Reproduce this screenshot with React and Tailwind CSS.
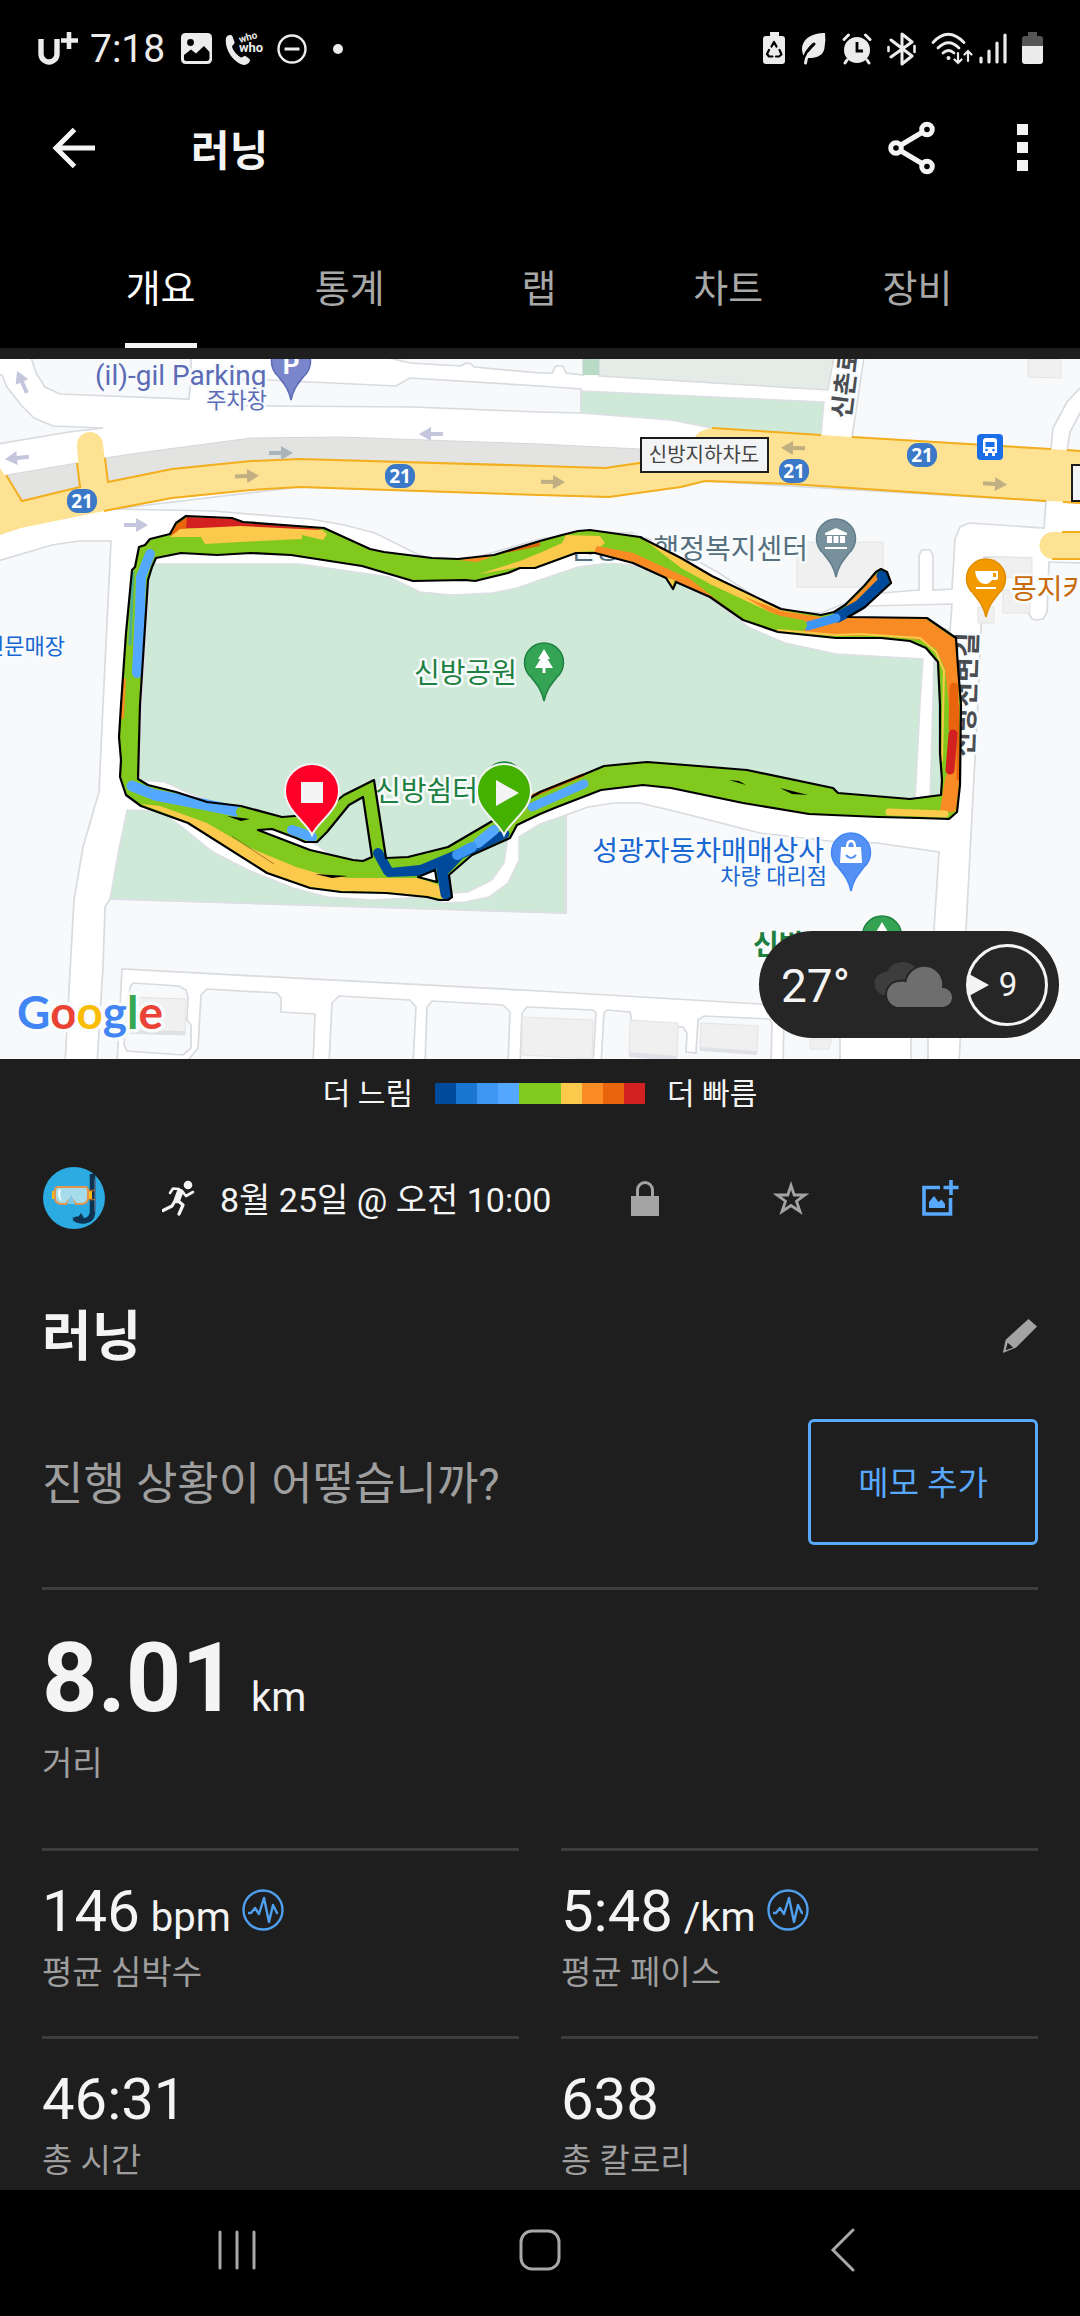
import React, { useState } from "react";
import { clsx } from "clsx";

const TABS = ["개요", "통계", "랩", "차트", "장비"];

const PACE_COLORS = [
  "bg-[#004a9c]",
  "bg-[#1976d2]",
  "bg-[#3d96f3]",
  "bg-[#55a8ff]",
  "bg-[#82c91e]",
  "bg-[#82c91e]",
  "bg-[#fbc94b]",
  "bg-[#fb8b25]",
  "bg-[#e8650d]",
  "bg-[#d32020]",
];

const STATS = [
  { value: "146", unit: "bpm", label: "평균 심박수", chart: true },
  { value: "5:48", unit: "/km", label: "평균 페이스", chart: true },
  { value: "46:31", label: "총 시간" },
  { value: "638", label: "총 칼로리" },
];

/* ---------- Status bar ---------- */

const StatusBar = () => (
  <div className="flex h-[98px] items-center justify-between bg-black pl-9 pr-9 text-[#ececec]">
    <div className="flex items-center gap-3">
      <svg width="42" height="40" viewBox="0 0 42 40" fill="none" stroke="currentColor">
        <path d="M5 10v15a8 8 0 0 0 16 0V10" strokeWidth="5.4" />
        <path d="M33 3v17M25 11.500h17" strokeWidth="4.600" />
      </svg>
      <span className="text-[39px] leading-[48px]">7:18</span>
      <div className="flex items-center gap-3 pl-1">
        <svg width="32" height="32" viewBox="0 0 32 32">
          <rect width="31" height="31" rx="4.500" fill="currentColor" />
          <circle cx="9.500" cy="9.500" r="3.400" fill="#000" />
          <path d="M3 26v-4l7-5.500 5 4 8-7.500 5.500 6V25q0 3-3 3H6q-3 0-3-2z" fill="#000" />
        </svg>
        <svg width="40" height="44" viewBox="0 -5 40 44" fill="currentColor">
          <path d="M1 6C2 3 6 2 7.500 4.500L9.500 10c.5 2-2 3-2.500 4.500 1 4.500 6 9.500 9 11 2 0 2.500-2 4.500-1.500l4 3c1.500 2-1 5.500-5 6C10 32-1 18 1 6z" />
          <text x="14" y="20" className="text-[13px] font-bold">who</text>
          <text x="15" y="11" transform="rotate(-16 15 11)" className="text-[10px] font-bold">who</text>
        </svg>
        <svg width="30" height="30" viewBox="0 0 30 30" fill="none" stroke="currentColor">
          <circle cx="15" cy="15" r="13.500" strokeWidth="2.400" />
          <path d="M7.500 15h15" strokeWidth="3" />
        </svg>
        <span className="ml-3.5 h-2.5 w-2.5 rounded-full bg-[#ececec]" />
      </div>
    </div>

    <div className="flex items-center gap-[15px]">
      <svg width="23" height="34" viewBox="0 0 23 34">
        <path d="M7 0h9v4h3q3 0 3 3v22q0 3-3 3H3q-3 0-3-3V7q0-3 3-3h4z" fill="currentColor" />
        <path d="M8.500 14.500 11 10l2.500 4.500M16.500 18l2 4.500-2.500 2h-3M9.500 24.500H6L4 22l2-4" fill="none" stroke="#000" strokeWidth="2.200" strokeLinecap="round" strokeLinejoin="round" />
      </svg>
      <svg width="26" height="34" viewBox="0 0 26 34">
        <path d="M24 1C12 1 1 6 1 18q0 4 3 8 18 1 19.500-10Q25 8 24 1z" fill="currentColor" />
        <path d="M13 12Q6 18 3 26" fill="none" stroke="#000" strokeWidth="3" strokeLinecap="round" />
        <path d="M8 21.500Q5 26 4.500 31" fill="none" stroke="currentColor" strokeWidth="3" strokeLinecap="round" />
      </svg>
      <svg width="30" height="34" viewBox="0 0 30 34" fill="none" stroke="currentColor" strokeLinecap="round">
        <circle cx="15" cy="18" r="13" fill="currentColor" stroke="none" />
        <path d="M2 7.500 6.500 3M28 7.500 23.500 3M5 28l-2 3M25 28l2 3" strokeWidth="3" />
        <path d="M15 10v9h6" stroke="#000" strokeWidth="2.800" strokeLinecap="butt" />
      </svg>
      <svg width="29" height="34" viewBox="0 0 29 34" fill="none" stroke="currentColor" strokeWidth="3" strokeLinejoin="round" strokeLinecap="round">
        <path d="m4 8 21 16-10 8V2l10 8L4 25" />
        <path d="M1.500 15v4M27.500 14v6" strokeWidth="2.600" />
      </svg>
      <div className="flex items-center gap-1.5">
        <svg width="42" height="34" viewBox="0 0 42 34" fill="none" stroke="currentColor" strokeWidth="2.800" strokeLinecap="round">
          <path d="M2 10.500Q17-6 33 10.500M7 16q10.500-10.500 21 0M12 21q5.500-5 11 0" />
          <circle cx="17.500" cy="26" r="2" fill="currentColor" stroke="none" />
          <path d="M27 21v10m-3.500-3.500L27 31l3.500-3.500M37 29V19m-3.500 3.500L37 19l3.500 3.500" strokeWidth="2.200" />
        </svg>
        <svg width="28" height="34" viewBox="0 0 28 34" stroke="currentColor" strokeWidth="3.200" strokeLinecap="round">
          <path d="M2 26v4M10 19v11M18 11v19M26 3v27" />
        </svg>
      </div>
      <svg width="22" height="34" viewBox="0 0 22 34">
        <path d="M6 0h9v4h3q3 0 3 3v7H0V7q0-3 3-3h3z" fill="#555" />
        <path d="M0 14h21v15q0 3-3 3H3q-3 0-3-3z" fill="currentColor" />
      </svg>
    </div>
  </div>
);

/* ---------- App bar ---------- */

const AppBar = () => (
  <header className="flex h-[99px] items-center justify-between bg-black pl-[51px] pr-[52px] text-[#f4f4f4]">
    <div className="flex items-center">
      <button type="button" aria-label="뒤로">
        <svg width="44" height="44" viewBox="0 0 44 44" fill="none" stroke="currentColor" strokeWidth="5">
          <path d="M23.500 3.500 5 22l18.500 18.500M5 22h39" />
        </svg>
      </button>
      <h1 className="ml-24 pt-2 text-[42px] font-bold leading-[56px]">러닝</h1>
    </div>
    <div className="flex items-center gap-20">
      <button type="button" aria-label="공유">
        <svg width="50" height="54" viewBox="0 0 50 54" fill="none" stroke="currentColor" strokeWidth="5">
          <circle cx="9" cy="27" r="5.300" />
          <circle cx="40" cy="8.500" r="5.300" />
          <circle cx="40" cy="45.500" r="5.300" />
          <path d="m14 24 21-12.500M14 30l21 12.500" />
        </svg>
      </button>
      <button type="button" aria-label="더보기" className="flex flex-col gap-[7px]">
        <span className="h-[11px] w-[11px] bg-[#f4f4f4]" />
        <span className="h-[11px] w-[11px] bg-[#f4f4f4]" />
        <span className="h-[11px] w-[11px] bg-[#f4f4f4]" />
      </button>
    </div>
  </header>
);

/* ---------- Map ---------- */

const MapPin = ({ x, y, fill, stroke, children }) => (
  <g transform={`translate(${x} ${y})`}>
    <path
      d="M0 39C-3 26-7 23-13 15A19.500 19.500 0 1 1 13 15C7 23 3 26 0 39z"
      fill={fill}
      stroke={stroke}
      strokeWidth="1.500"
    />
    {children}
  </g>
);

const Tree = () => <path d="M0-13 6-3H3.500L9 6H1.500v5h-3V6H-9l5.500-9H-6z" fill="#fff" />;

const RouteMarker = ({ x, y, fill, children }) => (
  <g transform={`translate(${x} ${y})`}>
    <path
      d="M0 44C-5 31-27 20-27 0A27 27 0 1 1 27 0C27 20 5 31 0 44z"
      fill={fill}
      stroke="#f4f4f4"
      strokeWidth="2"
    />
    {children}
  </g>
);

const ARROWS = [
  [22, 23, -114, "#c3c6dc"],
  [17, 99, 174, "#c3c6dc"],
  [431, 75, 180, "#c3c6dc"],
  [281, 94, 0, "#a9b5bb"],
  [247, 117, -2, "#c0af82"],
  [136, 166, 0, "#c3c6dc"],
  [553, 123, 1, "#c0af82"],
  [793, 89, 181, "#c0af82"],
  [995, 125, 3, "#c0af82"],
];

const BADGES = [
  [82, 142],
  [400, 117],
  [794, 112],
  [922, 96],
];

const BLOCKS = [
  "-2,16 2,16 7,28 21,46 34,59 53,67 103,69 69,73 -2,85",
  "31,-2 36,14 45,28 60,35 189,40 191,20 191,-2",
  "240,20 268,21 396,27 410,19 540,27 581,30 581,54 540,53 413,48 268,47 240,47",
  "385,-2 410,4 461,7 466,4 471,5 474,8 540,14 552,14 556,7 563,7 566,14 583,16 583,-2",
  "-2,202 52,186 79,182 111,182 103,346 99,433 83,488 74,541 65,705 -2,705",
  "114,150 213,152 310,160 344,166 375,174 399,186 417,195 440,202 470,200 540,180 585,173 633,174 678,191 719,214 760,241 790,252 821,254 860,238 881,234 919,231 919,196 922,191 930,191 933,196 933,231 952,230 955,180 960,168 969,164 1044,169 1046,142 705,122 609,138 300,128",
  "867,247 952,245 950,272 925,262 850,259",
  "984,198 1031,199 1028,253 1032,260 1037,261 1043,260 1047,253 1049,203 1085,204 1085,705 959,705 966,571 978,341 981,271",
  "864,-2 852,78 1051,90 1053,69 1067,43 1080,29 1085,29 1085,-2",
  "1085,50 1080,54 1070,73 1067,92 1085,94",
  "110,540 105,548 103,608 97,705 117,705 122,610 540,632 760,645 930,655 934,571 939,493 877,484 829,482 760,474 678,453 640,444 614,444 588,448 566,456 566,554",
  "133,624 179,627 186,631 188,638 187,661 191,666 191,689 183,696 127,692 124,686 130,628",
  "207,630 277,634 281,639 281,653 315,655 313,705 185,705 198,689 201,636",
  "339,637 410,641 416,648 413,705 329,705 332,644",
  "432,642 503,646 510,653 508,705 425,705 427,648",
  "527,648 593,651 596,654 593,705 520,705 522,654",
  "607,651 630,653 632,663 683,668 687,674 686,693 696,694 698,661 704,657 769,660 772,664 771,705 601,705 604,654",
  "784,660 840,664 840,705 783,705",
  "911,660 928,660 928,705 911,705",
];

const PARKS = [
  "150,205 300,205 389,218 420,233 451,236 492,234 517,229 540,221 578,208 609,204 633,206 671,221 709,239 750,269 785,284 836,295 923,300 920,346 915,442 836,436 747,415 647,407 602,410 540,440 489,472 448,495 403,505 358,505 328,494 317,486 272,466 213,443 193,436 165,423 139,421 142,346",
  "934,302 946,312 945,442 930,442",
  "127,451 160,452 182,468 213,493 248,511 293,529 327,538 372,541 427,538 444,544 465,543 489,538 508,524 519,501 519,478 540,465 566,456 565,554 110,540 118,495",
  "508,478 504,504 492,521 468,533 453,534 449,514 475,494",
  "581,32 824,43 821,76 712,69 671,61 581,54",
];

const BUILDINGS = [
  "797,183 883,183 883,228 797,228",
  "994,198 1032,199 1032,219 994,218",
  "1003,231 1030,231 1030,254 1003,254",
  "978,248 994,248 994,264 978,264",
  "1028,0 1061,0 1061,19 1028,18",
  "130,638 186,640 185,676 130,674",
  "522,658 593,661 592,700 522,696",
  "630,661 678,664 677,698 629,694",
  "701,664 758,667 757,694 700,690",
  "810,680 832,680 829,690 810,690",
];

const ROUTE_SHAPE =
  "M121 346 126 274 132 211 135 208 139 188 145 186 150 180 170 175 176 164 186 157 232 159 243 163 324 169 370 190 384 193 432 199 458 200 494 196 540 182 562 176 578 172 590 171 640 178 681 199 712 217 781 250 821 256 834 253 845 246 864 227 876 213 881 210 887 213 891 224 865 248 848 258 927 259 956 279 958 308 961 346 960 426 957 453 949 460 919 459 879 458 809 455 743 444 671 429 643 426 601 431 557 448 540 455 517 466 510 479 472 496 449 516 452 538 448 541 439 541 427 538 386 534 341 533 310 529 267 514 188 464 141 447 126 436 120 418 121 401 119 378z" +
  "M140 346 148 221 152 208 156 199 181 194 217 196 251 194 291 196 362 207 413 222 465 221 475 222 508 214 520 209 535 209 576 194 595 194 633 204 666 219 673 230 676 223 710 238 743 261 778 273 836 279 881 279 910 282 926 289 938 303 940 346 940 394 942 421 941 436 910 440 838 434 833 429 747 411 698 407 647 403 604 407 585 415 540 433 489 464 448 488 408 498 386 499 374 421 344 436 320 455 282 458 241 447 207 443 176 433 148 426 138 420z" +
  "M349 446 363 438 372 498 363 502 353 501 310 491 258 471 272 470 296 479 305 483 317 483 327 473z" +
  "M418 518 435 511 437 523z";

// Pace-coloured areas, drawn over the green base track
const PACE_AREAS = [
  ["#e8650d", "170,177 177,165 187,158 193,160 193,168 178,174"],
  ["#d32020", "187,158 232,160 243,164 322,170 300,174 186,169"],
  ["#fbc94b", "170,178 180,170 240,167 322,171 327,175 323,181 302,176 302,180 240,183 205,185 201,178"],
  ["#f98b25", "458,201 494,197 477,203"],
  ["#d9650d", "500,195 540,183 540,187"],
  ["#fbc94b", "479,215 520,202 542,193 562,184 566,176 600,177 605,184 595,192 576,193 535,208 520,208"],
  ["#f98b25", "597,187 633,194 690,220 726,248 710,237 666,218 633,203 594,193"],
  ["#fbc94b", "664,218 674,221 673,229"],
  ["#fbc94b", "645,181 681,200 712,218 781,251 812,258 812,264 770,253 712,226 681,209"],
  ["#f98b25", "745,238 781,252 821,258 850,258 926,260 955,280 958,310 959,346 949,346 945,310 936,290 920,281 880,276 840,277 806,275 800,264 770,253"],
  ["#f98b25", "846,247 864,229 876,215 880,222 862,240 850,252"],
  ["#f98b25", "960,380 959,426 956,452 940,452 945,420"],
  ["#fbc94b", "141,445 160,447 207,464 248,488 296,508 317,514 348,519 400,519 418,519 439,526 444,540 427,537 386,533 341,532 310,528 267,513 188,463"],
  ["#004a9c", "384,505 390,509 420,506 458,490 468,494 449,514 437,516 437,510 418,517 387,518"],
];

const PACE_LINES = [
  ["#4fae8f", 3, "133,213 130,285"],
  ["#55a8ff", 10, "150,195 141,218 140,251 137,314"],
  ["#f98b25", 4, "124,321 122,358"],
  ["#fbc94b", 2, "778,271 836,276 860,275 920,279 936,293 944,312 942,402"],
  ["#004a9c", 11, "882,217 884,222 860,246 838,258"],
  ["#3d96f3", 9, "836,259 808,267"],
  ["#82c91e", 10, "802,266 780,262"],
  ["#e8650d", 3, "958,346 958,420"],
  ["#e8650d", 9, "954,328 953,369"],
  ["#d32020", 9, "953,375 950,411"],
  ["#fbc94b", 7, "889,453 945,455"],
  ["#f98b25", 9, "947,444 951,449"],
  ["#d9650d", 3, "532,437 583,416"],
  ["#55a8ff", 9, "584,425 532,448"],
  ["#004a9c", 9, "505,475 462,495"],
  ["#55a8ff", 10, "494,471 478,484"],
  ["#3d96f3", 10, "472,488 457,496"],
  ["#004a9c", 10, "378,494 388,512"],
  ["#004a9c", 11, "442,512 446,535"],
  ["#55a8ff", 11, "132,427 155,436 207,446 236,452"],
  ["#82c91e", 10, "241,453 262,463"],
  ["#55a8ff", 10, "292,471 312,478"],
];

const ROAD_EDGES = [
  "6,116 22,142 80,128 77,104",
  "105,99 108,123 172,110 251,102 300,100 540,107 605,109 640,104",
  "712,69 821,76",
  "852,78 1051,90",
  "1067,91 1080,92",
  "104,152 114,150 172,139 251,131 300,128 540,136 609,138 681,128 705,122 791,125 1046,142",
  "1063,143 1080,144",
  "1052,200 1080,200",
  "1062,173 1080,173",
];

const LABEL = "[paint-order:stroke] stroke-[#f8fbfc] stroke-[5px] [stroke-linejoin:round]";

const RouteMap = () => (
  <svg viewBox="0 0 1080 700" className="block h-auto w-full bg-white" role="img" aria-label="러닝 경로 지도">
    <g fill="#f7f9fb" stroke="#d8dbdf" strokeWidth="1.700">
      {BLOCKS.map((points) => <polygon key={points} points={points} />)}
    </g>
    <polygon points="599,-2 834,-2 828,31 599,17" fill="#e5ebe6" stroke="#d8dbdf" strokeWidth="1.500" />
    <rect x="583" width="16" height="16" fill="#b9dbc5" />
    <g fill="#cfe9d8" stroke="#dcdfe3" strokeWidth="1.500">
      {PARKS.map((points) => <polygon key={points} points={points} />)}
    </g>
    <g fill="#f0f0f0" stroke="#e4e4e4">
      {BUILDINGS.map((points) => <polygon key={points} points={points} />)}
    </g>
    <path d="m629 693 48 4v5l-48-4zM700 688l57 4v4l-57-4zM131 671l54 1v4l-54-1z" fill="#e0e1e6" />

    {/* Highway 21 */}
    <path
      d="M7 116 77 104 105 99 138 94 251 79 341 78 540 85 640 90V110L540 110 300 104 172 114 60 140 22 142z"
      fill="#e3e3e1"
      stroke="#d5d8da"
    />
    <path
      d="M0 109 22 142 80 128 77 86A13 13 0 0 1 103 86L108 123 172 110 251 102 300 100 540 107 605 109 650 100 694 80Q697 71 712 69L821 76 852 78 1080 92V144L791 125 705 122 681 128 609 138 540 136 300 128 251 131 172 139 114 150 21 169 0 176z"
      fill="#fde293"
    />
    <path d="M1080 173H1053A13.500 13.500 0 0 0 1053 200H1080z" fill="#fde293" />
    <g fill="none" stroke="#f2ae1c" strokeWidth="2">
      {ROAD_EDGES.map((points) => <polyline key={points} points={points} />)}
    </g>

    {ARROWS.map(([x, y, angle, color]) => (
      <path
        key={`${x}-${y}`}
        d="M-12-2H0V-7L12 0 0 7V2H-12z"
        fill={color}
        transform={`translate(${x} ${y}) rotate(${angle})`}
      />
    ))}

    {BADGES.map(([x, y]) => (
      <g key={x}>
        <rect x={x - 15} y={y - 12} width="30" height="24" rx="11" fill="#3c78c8" />
        <text x={x} y={y + 7} textAnchor="middle" fill="#fff" className="font-['Noto_Sans'] text-[19px] font-bold">21</text>
      </g>
    ))}

    <rect x="641" y="79" width="127" height="34" fill="#f3f4f6" stroke="#1c1c1c" strokeWidth="2" />
    <text x="704" y="103" textAnchor="middle" fill="#444" className="text-[20px]">신방지하차도</text>
    <rect x="1072" y="106" width="30" height="36" fill="#f3f4f6" stroke="#1c1c1c" strokeWidth="2" />

    <g transform="translate(977 75)">
      <rect width="26" height="26" rx="4" fill="#1a6fe8" />
      <path d="M6 7q0-3 3-3h8q3 0 3 3v12h-2v3h-3v-3h-4v3H8v-3H6z" fill="#fff" />
      <path d="M8.500 8h9v5h-9z" fill="#1a6fe8" />
      <circle cx="9.500" cy="16" r="1.300" fill="#1a6fe8" />
      <circle cx="16.500" cy="16" r="1.300" fill="#1a6fe8" />
    </g>

    {/* Street names */}
    <text transform="translate(850 60) rotate(-83)" fill="#4a4d52" className={clsx(LABEL, "text-[25px] font-bold")}>신촌로</text>
    <text transform="translate(973 398) rotate(-88)" fill="#4a4d52" className={clsx(LABEL, "text-[27px] font-bold")}>신방천변길</text>

    {/* Places */}
    <text x="95" y="26" fill="#5c6bb5" className={clsx(LABEL, "text-[28px]")}>(il)-gil Parking</text>
    <text x="267" y="49" textAnchor="end" fill="#5c6bb5" className={clsx(LABEL, "text-[22px]")}>주차장</text>
    <text x="65" y="295" textAnchor="end" fill="#1967d2" className={clsx(LABEL, "text-[22px]")}>전문매장</text>
    <text x="517" y="324" textAnchor="end" fill="#1e8040" className={clsx(LABEL, "text-[28px]")}>신방공원</text>
    <text x="478" y="442" textAnchor="end" fill="#1e8040" className={clsx(LABEL, "text-[28px]")}>신방쉼터</text>
    <text x="808" y="200" textAnchor="end" fill="#56707f" className={clsx(LABEL, "text-[28px]")}>신방동 행정복지센터</text>
    <text x="824" y="502" textAnchor="end" fill="#1967d2" className={clsx(LABEL, "text-[28px]")}>성광자동차매매상사</text>
    <text x="827" y="525" textAnchor="end" fill="#1967d2" className={clsx(LABEL, "text-[22px]")}>차량 대리점</text>
    <text x="753" y="596" fill="#1e8040" className={clsx(LABEL, "text-[28px] font-bold")}>신방공원</text>
    <text x="1011" y="240" fill="#c96a0a" className={clsx(LABEL, "text-[28px]")}>몽지카페</text>

    <MapPin x={291} y={2} fill="#7986cb" stroke="#5c6bb5">
      <text y="13" textAnchor="middle" fill="#fff" className="text-[26px] font-bold">P</text>
    </MapPin>
    <MapPin x={544} y={303} fill="#34a353" stroke="#1e8040"><Tree /></MapPin>
    <MapPin x={504} y={422} fill="#34a353" stroke="#1e8040" />
    <MapPin x={882} y={576} fill="#34a353" stroke="#1e8040"><Tree /></MapPin>
    <MapPin x={836} y={179} fill="#78909c" stroke="#607d8b">
      <path d="m0-10 11 5v2h-22v-2zM-9-2h5v7h-5zM-2.500-2h5v7h-5zM4-2h5v7H4zM-11 9h22v2h-22z" fill="#fff" />
    </MapPin>
    <MapPin x={986} y={219} fill="#f29900" stroke="#e08c00">
      <path d="M-11-7h23v7q0 2-3 2H6q-3 4-6 4-9 0-11-13zM-10 9h20v2h-20z" fill="#fff" />
      <path d="M7-5h3v4H7z" fill="#f29900" />
    </MapPin>
    <MapPin x={851} y={493} fill="#5491f5" stroke="#4285f4">
      <path d="M-10-5h20l1 16h-22z" fill="#fff" />
      <path d="M-4-4Q-4-11 0-11T4-4" fill="none" stroke="#fff" strokeWidth="2.500" />
      <path d="M-5 3Q0 9 5 3" fill="none" stroke="#5491f5" strokeWidth="2" />
    </MapPin>

    {/* Track */}
    <path d={ROUTE_SHAPE} fill="#82c91e" fillRule="evenodd" />
    {PACE_AREAS.map(([color, points]) => <polygon key={points} points={points} fill={color} />)}
    {PACE_LINES.map(([color, width, points]) => (
      <polyline key={points} points={points} fill="none" stroke={color} strokeWidth={width} strokeLinecap="round" strokeLinejoin="round" />
    ))}
    <path d={ROUTE_SHAPE} fill="none" stroke="#000" strokeWidth="2.200" strokeLinejoin="round" />
    <path d="M227 457 241 462 250 460zM315 515 332 519 348 517zM729 421l10 1 7 4zM780 429l12 3 16 4-16-1z" />
    <path d="M232 477 251 490 274 505" fill="none" stroke="#7a5a20" strokeWidth="0.700" />

    <RouteMarker x={312} y={432} fill="#ff0029">
      <rect x="-11" y="-9" width="22" height="21" fill="#f4f4f4" />
    </RouteMarker>
    <RouteMarker x={504} y={432} fill="#44b000">
      <path d="M-8-11 15 2-8 15z" fill="#f4f4f4" />
    </RouteMarker>

    <text x="17" y="670" className="[paint-order:stroke] stroke-[#f8fbfc] stroke-[7px] [stroke-linejoin:round] font-['Lato'] text-[46px] font-bold">
      <tspan fill="#4285f4">G</tspan>
      <tspan fill="#ea4335">o</tspan>
      <tspan fill="#fbbc05">o</tspan>
      <tspan fill="#4285f4">g</tspan>
      <tspan fill="#34a853">l</tspan>
      <tspan fill="#ea4335">e</tspan>
    </text>
  </svg>
);

const WeatherPill = () => (
  <div className="absolute bottom-[21px] right-[21px] flex h-[107px] items-center rounded-full bg-[#262626] pl-[22px] pr-[11px] text-[#f4f4f4]">
    <span className="w-[90px] pt-0.5 text-[46px] leading-[56px]">27°</span>
    <svg width="82" height="48" viewBox="0 0 82 48">
      <path d="M12 34A11.500 11.500 0 0 1 11 12Q15 10 16 11A17 17 0 0 1 46 9Q50 34 30 34z" fill="#3d3d3d" />
      <path d="M29 47A13 13 0 0 1 28 20Q32 19 34.500 20A19 19 0 0 1 72 26 10.500 10.500 0 0 1 71 47z" fill="#6e6e6e" stroke="#262626" strokeWidth="2" />
    </svg>
    <div className="ml-[13px] flex h-[82px] w-[82px] items-center rounded-full border-[3px] border-[#f4f4f4]">
      <svg width="20" height="22" viewBox="0 0 20 22" fill="currentColor">
        <path d="M0 0 20 11 0 22z" />
      </svg>
      <span className="w-[38px] text-center text-[33px] leading-[40px]">9</span>
    </div>
  </div>
);

const PaceLegend = () => (
  <div className="flex items-center justify-center gap-[22px] pt-3 text-[30px] leading-[42px] text-[#f4f4f4]">
    <span className="pt-0.5">더 느림</span>
    <div className="flex">
      {PACE_COLORS.map((color, i) => (
        <span key={i} className={clsx("h-[21px] w-[21px]", color)} />
      ))}
    </div>
    <span className="pt-0.5">더 빠름</span>
  </div>
);

/* ---------- Activity details ---------- */

const Avatar = () => (
  <svg width="62" height="62" viewBox="0 0 62 62" role="img" aria-label="프로필">
    <circle cx="31" cy="31" r="31" fill="#2babe2" />
    <path d="M49.500 7v38q0 8-9 9-6 0-9-3" fill="none" stroke="#0e3350" strokeWidth="5.500" />
    <path d="M52 12v33" stroke="#4d7291" strokeWidth="1.500" />
    <path d="M29 50q6 2 9-4l3 5-4 5q-4 0-8-6z" fill="#0e3350" />
    <path d="M9 24h4v8H9zM45 24h4v8h-4z" fill="#fbb917" />
    <path d="M46 23.500h6M46 32.500h6" stroke="#a8642c" strokeWidth="1.500" />
    <path d="M15 20h27q3 0 3 4v6q0 7-7 7h-5l-5-6-5 6h-4q-7 0-7-7v-6q0-4 3-4z" fill="#a6dcea" stroke="#e3954d" strokeWidth="2" />
    <path d="M15 25q0-3 3-3-2 6 1 12-4-1-4-9z" fill="#eefafd" />
    <path d="m28 28 4 9h-8z" fill="#7cc9e8" />
  </svg>
);

const RunnerIcon = () => (
  <svg width="34" height="36" viewBox="0 0 34 36" fill="none" stroke="currentColor" strokeLinecap="round" strokeLinejoin="round">
    <circle cx="26" cy="5" r="4.300" fill="currentColor" stroke="none" />
    <path d="M18 12 15 20" strokeWidth="6.500" />
    <path d="m17 9-6-.5L8 13M20 11l4 5 7-4" strokeWidth="2.600" />
    <path d="m13 21-3 5-9 4.500M15 20l6 5-4 9" strokeWidth="3.200" />
  </svg>
);

const ActivityMeta = () => (
  <div className="flex items-center pl-[43px] pr-[121px] pt-[52px] text-[#f4f4f4]">
    <Avatar />
    <div className="ml-[57px] flex items-center gap-6">
      <RunnerIcon />
      <span className="pt-1 text-[34px] leading-[44px]">8월 25일 @ 오전 10:00</span>
    </div>
    <div className="flex flex-1 items-center justify-between pl-20">
      <button type="button" aria-label="비공개" className="text-[#a3a3a3]">
        <svg width="28" height="36" viewBox="0 0 28 36">
          <path d="M0 16h28v20H0z" fill="currentColor" />
          <path d="M6.500 17v-7a7.500 7.500 0 0 1 15 0v7" fill="none" stroke="currentColor" strokeWidth="3" />
        </svg>
      </button>
      <button type="button" aria-label="즐겨찾기" className="text-[#a3a3a3]">
        <svg width="36" height="34" viewBox="0 0 36 34" fill="none" stroke="currentColor" strokeWidth="2.800">
          <path d="m18 4.500 3.200 9.500H32l-8.500 6.200L27 30.500l-9-6-9 6 3.500-10.300L4 14h10.800z" />
        </svg>
      </button>
      <button type="button" aria-label="사진 추가" className="text-[#58a8fb]">
        <svg width="37" height="36" viewBox="0 0 37 36" fill="none" stroke="currentColor">
          <path d="M18 7.500H2v26.500h26.500V18" strokeWidth="3.600" />
          <path d="M29 0v15M21.500 7.500H36.500" strokeWidth="3.600" />
          <path d="M7 28v-6l5-6 4.500 6 3-2.500L23 24v4z" fill="currentColor" stroke="none" />
        </svg>
      </button>
    </div>
  </div>
);

const ChartButton = ({ label }) => (
  <button type="button" aria-label={label} className="self-start pt-1.5 text-[#4f9fee]">
    <svg width="42" height="42" viewBox="0 0 42 42" fill="none" stroke="currentColor" strokeWidth="2.400">
      <circle cx="21" cy="21" r="19.500" />
      <path d="M6 24h3l4-5 4 6 5-16 5 24 4-17 4 8h1" strokeLinejoin="round" />
    </svg>
  </button>
);

const Stat = ({ value, unit, label, chart }) => (
  <div className="border-t-[3px] border-[#3d3d3d] pt-8">
    <div className="flex h-14 items-baseline text-[#f4f4f4]">
      <span className="text-[58px] leading-[56px]">{value}</span>
      {unit && <span className="mx-[11px] text-[40px] leading-[56px]">{unit}</span>}
      {chart && <ChartButton label={`${label} 차트`} />}
    </div>
    <p className="mt-3.5 text-[33px] leading-[40px] text-[#9e9e9e]">{label}</p>
  </div>
);

const NavBar = () => (
  <nav className="flex h-[126px] items-center bg-black px-[86px] pb-1.5 text-[#a8a8a8]">
    <button type="button" aria-label="최근 앱" className="flex flex-1 justify-center">
      <svg width="40" height="42" viewBox="0 0 40 42" stroke="currentColor" strokeWidth="3" strokeLinecap="round">
        <path d="M3 3v36M20 3v36M37 3v36" />
      </svg>
    </button>
    <button type="button" aria-label="홈" className="flex flex-1 justify-center">
      <svg width="42" height="42" viewBox="0 0 42 42" fill="none" stroke="currentColor" strokeWidth="3">
        <rect x="2" y="2" width="38" height="38" rx="11" />
      </svg>
    </button>
    <button type="button" aria-label="뒤로 가기" className="flex flex-1 justify-center">
      <svg width="26" height="44" viewBox="0 0 26 44" fill="none" stroke="currentColor" strokeWidth="3" strokeLinecap="round">
        <path d="M23 2 3 22l20 20" />
      </svg>
    </button>
  </nav>
);

const App = () => {
  const [activeTab, setActiveTab] = useState("개요");

  return (
    <div className="flex min-h-screen flex-col bg-[#1e1e1e] font-['Roboto','Noto_Sans_CJK_KR',sans-serif]">
      <StatusBar />
      <AppBar />

      {/* Tabs */}
      <div role="tablist" className="flex bg-black pl-[66px] pr-[68px] pt-16">
        {TABS.map((tab) => (
          <button
            key={tab}
            type="button"
            role="tab"
            aria-selected={tab === activeTab}
            onClick={() => setActiveTab(tab)}
            className={clsx(
              "flex flex-1 flex-col items-center text-[38px] leading-[56px]",
              tab === activeTab ? "text-white" : "text-[#a8a8a8]"
            )}
          >
            <span>{tab}</span>
            <span className={clsx("mt-[26px] h-[5px] w-[72px]", tab === activeTab && "bg-[#f4f4f4]")} />
          </button>
        ))}
      </div>

      <main className="flex-1">
        <section className="relative mt-[11px]">
          <RouteMap />
          <WeatherPill />
        </section>
        <PaceLegend />
        <ActivityMeta />

        <div className="px-[42px] pt-[69px]">
          {/* Title and note */}
          <div className="flex items-center justify-between">
            <h2 className="pt-1 text-[54px] font-bold leading-[72px] text-[#f4f4f4]">러닝</h2>
            <button type="button" aria-label="이름 수정" className="text-[#a3a3a3]">
              <svg width="38" height="36" viewBox="0 0 40 36" fill="currentColor">
                <path d="m30 0 9 8-22 22L3 36l3-14zM8 25 6 33l8-3z" fillRule="evenodd" />
              </svg>
            </button>
          </div>
          <div className="mt-[45px] flex items-center justify-between">
            <p className="pt-1.5 text-[45px] leading-[60px] text-[#9e9e9e]">진행 상황이 어떻습니까?</p>
            <button
              type="button"
              className="h-[126px] rounded-md border-[3px] border-[#58a8fb] px-[47px] pt-1 text-[33px] leading-[44px] text-[#58a8fb]"
            >
              메모 추가
            </button>
          </div>

          {/* Distance */}
          <div className="mt-[42px] border-t-[3px] border-[#3d3d3d] pt-[38px]">
            <div className="flex items-baseline text-[#f4f4f4]">
              <span className="text-[97px] font-bold leading-[100px]">8.01</span>
              <span className="ml-3.5 text-[40px] leading-[56px]">km</span>
            </div>
            <p className="mt-4 text-[33px] leading-[40px] text-[#9e9e9e]">거리</p>
          </div>

          {/* Stats */}
          <div className="mt-[64px] grid grid-cols-2 gap-x-[42px] gap-y-[43px] pb-2">
            {STATS.map((stat) => <Stat key={stat.label} {...stat} />)}
          </div>
        </div>
      </main>

      <NavBar />
    </div>
  );
};

export default App;
